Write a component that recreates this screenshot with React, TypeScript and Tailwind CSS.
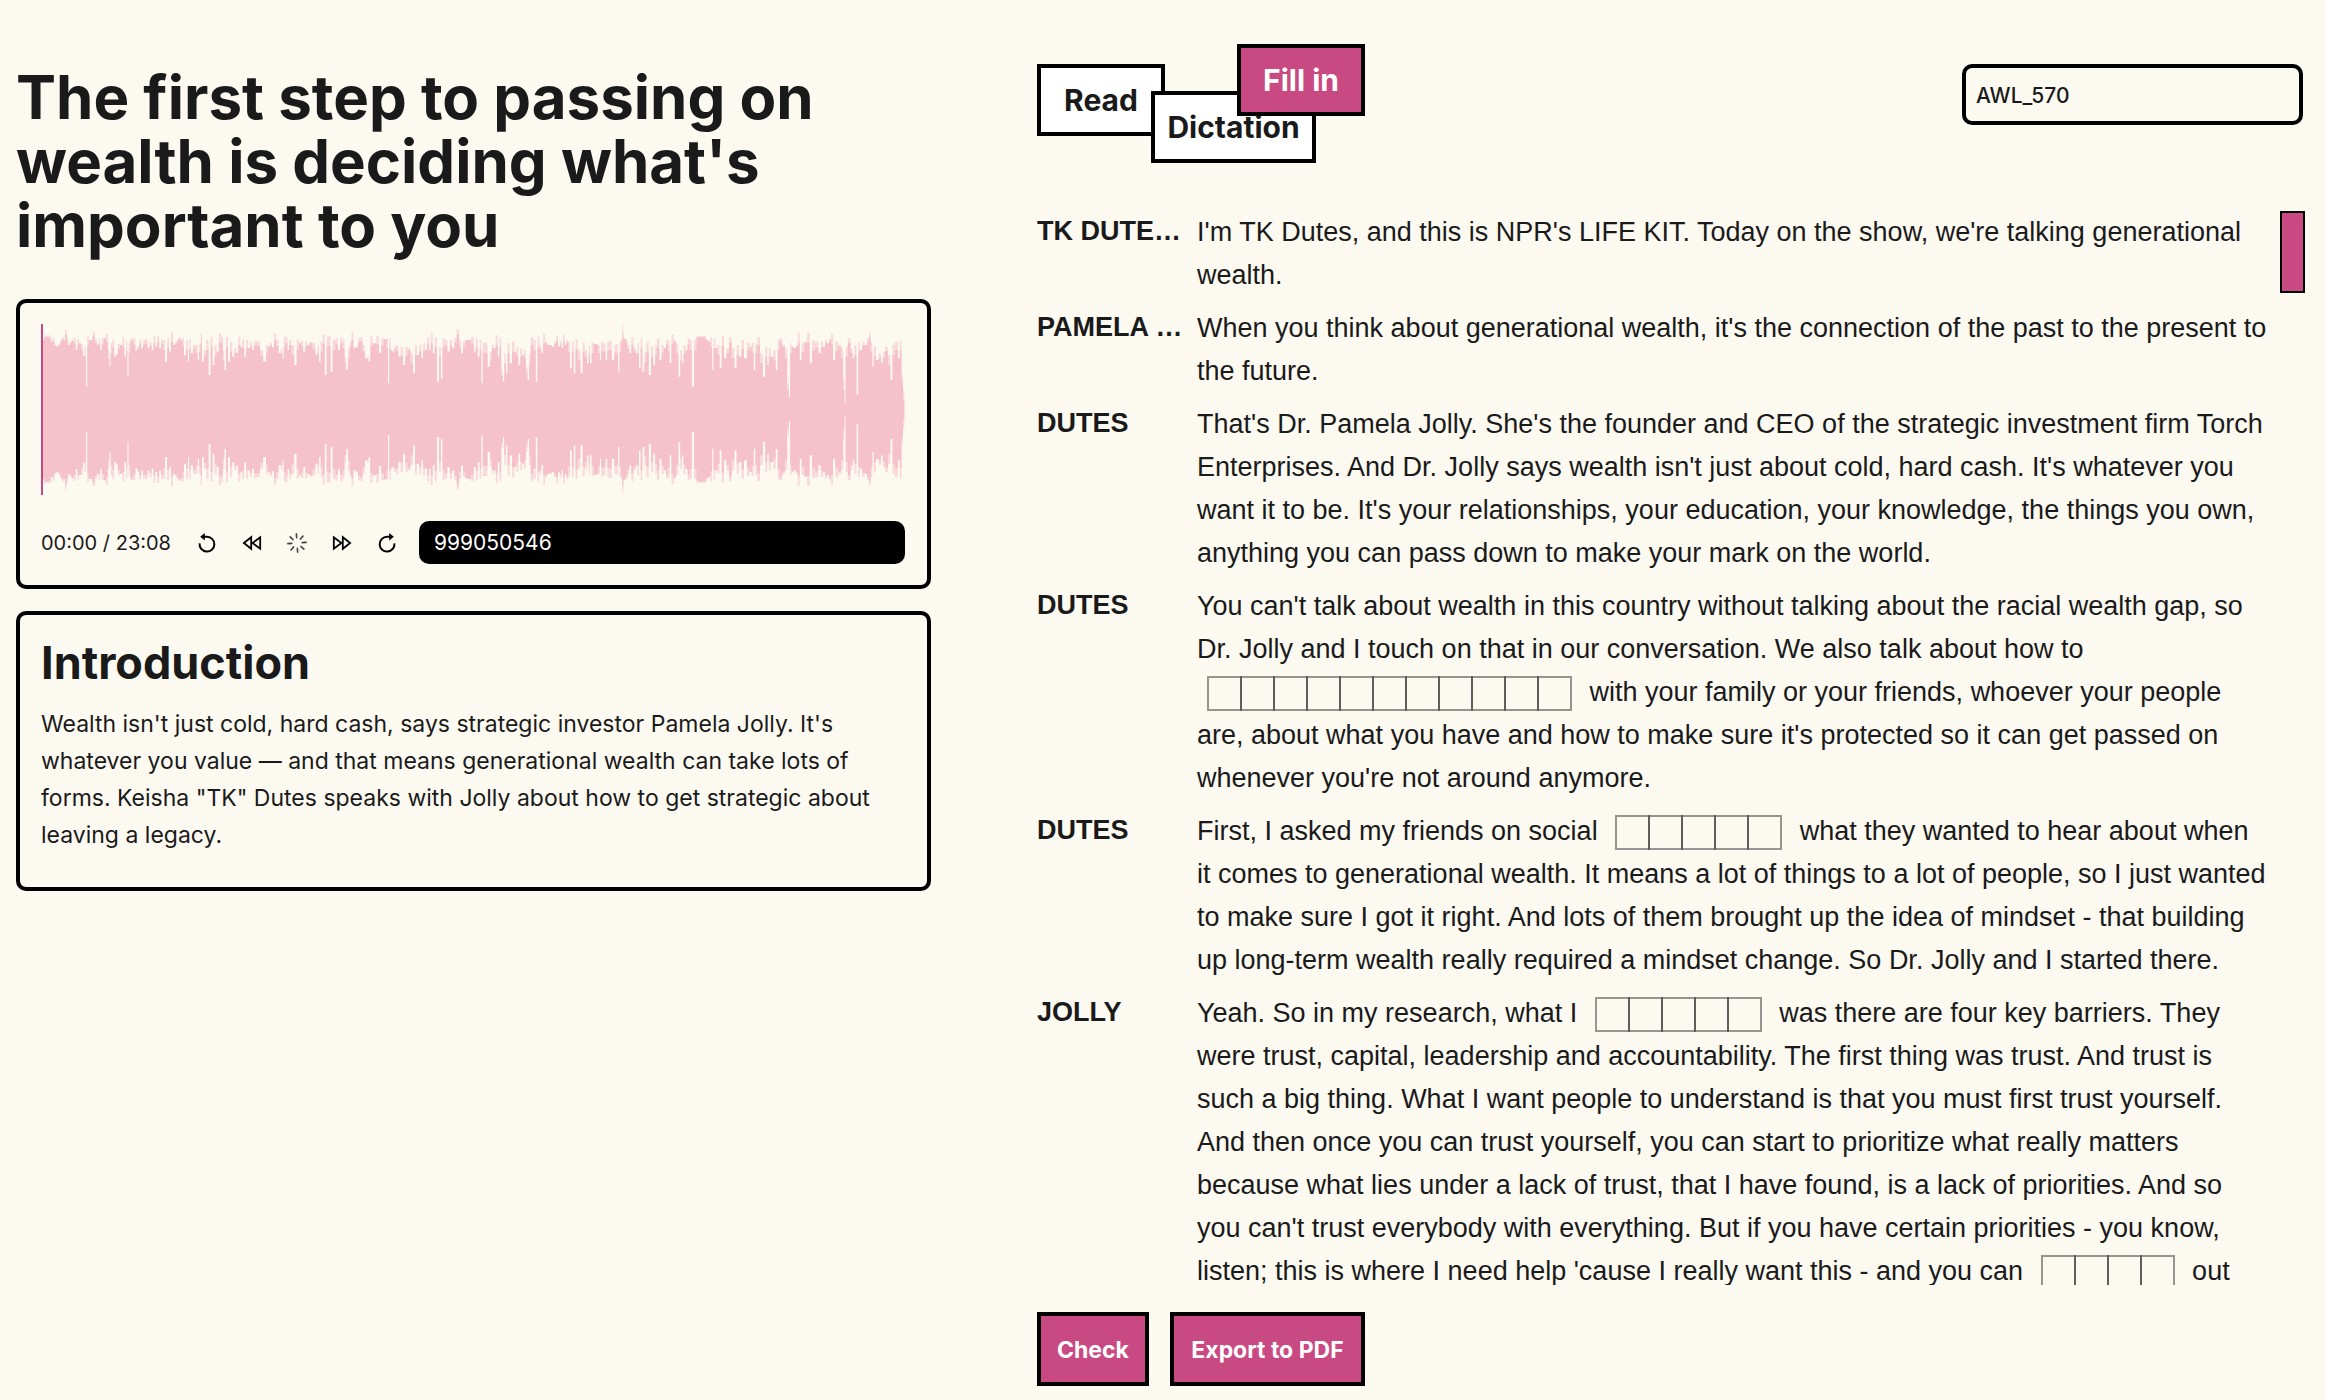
import React from "react";

/* Waveform peaks as x,y pairs on a 2592 x 513 grid (three units per pixel). */
const PEAKS_A = [
  22,60,28,45,34,50,42,46,48,65,52,53,58,75,65,80,70,72,76,60,80,50,84,60,90,28,94,50,98,75,104,65,110,60,116,53,122,90,126,57,
  132,70,138,72,143,108,148,80,152,200,156,48,160,60,166,60,173,37,180,60,186,75,190,55,195,90,200,55,207,55,213,42,218,90,222,140,226,70,232,60,
  237,110,243,100,248,72,256,75,262,52,268,110,272,62,276,170,280,70,286,56,295,55,301,92,307,80,313,57,318,85,325,60,332,58,337,85,344,65,350,90,
  355,48,361,80,366,48,373,85,378,58,384,60,390,125,397,55,402,95,408,37,414,75,419,68,425,60,430,52,437,60,441,52,447,105,454,60,458,125,461,57,
  467,100,475,75,483,75,487,120,492,72,496,40,500,125,507,90,514,60,521,165,527,50,532,135,539,75,545,95,552,40,558,50,563,90,567,150,573,50,579,125,
  585,65,592,110,598,85,604,100,610,50,616,80,621,58,628,110,633,60,640,85,645,65,652,90,657,62,668,65,676,90,687,125,693,75,699,80,704,68,711,82,
  717,42,724,58,731,100,738,85,741,115,746,50,752,50,757,90,762,60,770,75,779,135,785,60,792,70,798,62,805,95,811,62,817,75,825,65,834,70,842,105,
  847,75,851,125,857,65,863,42,869,165,875,50,880,48,887,155,893,60,903,55,908,90,916,52,923,60,928,110,933,150,939,85,944,65,949,37,955,85,963,80,
  969,55,976,52,983,75,990,115,995,110,1000,125,1006,47,1013,70,1018,70,1024,48,1033,98,1039,55,1048,58,1054,55,1058,190,1062,55,1066,90,1072,95,
  1078,80,1084,75,1090,110,1097,80,1105,135,1111,80,1119,85,1128,100,1134,160,1140,75,1146,105,1153,75,1159,115,1164,68,1170,90,1177,52,1181,90,
  1187,40,1193,100,1199,52,1206,185,1212,80,1217,178,1222,55,1230,60,1238,95,1245,60,1252,85,1258,55,1266,28,1272,60,1278,100,1284,65,1292,60,1300,60,
];
const PEAKS_B = [
  8,52,15,95,20,55,26,110,32,60,36,190,41,68,48,68,57,140,63,95,68,75,74,85,80,46,86,110,91,52,96,150,101,185,105,100,110,160,115,70,122,130,130,65,
  136,95,142,80,148,135,154,85,160,105,165,90,170,140,175,180,180,100,184,52,194,60,200,185,205,50,211,75,217,100,222,42,228,65,235,75,243,75,249,80,
  256,65,261,48,267,80,272,62,277,85,281,45,287,75,291,60,297,65,303,145,308,65,314,160,319,58,327,90,335,160,341,68,348,90,354,130,358,75,362,130,
  368,68,375,72,382,72,388,78,391,120,396,65,403,70,410,120,414,65,421,62,429,120,437,75,442,72,446,155,451,65,456,60,458,15,462,55,469,58,475,75,
  481,100,487,52,494,85,500,100,504,70,510,145,514,55,520,155,526,100,532,65,540,165,546,80,553,135,558,75,564,55,572,120,578,75,585,85,591,60,596,62,
  601,130,608,43,614,60,622,70,628,170,634,90,638,130,643,75,650,90,656,55,662,60,669,200,675,60,684,47,693,50,703,47,712,58,718,65,724,52,729,150,
  733,55,739,85,745,75,752,145,758,48,766,115,773,85,781,52,789,85,797,145,803,75,811,110,818,60,826,115,836,68,842,80,848,68,854,150,858,70,866,52,
  874,100,883,170,889,80,894,135,899,85,906,110,914,90,920,150,926,58,933,55,940,75,949,85,954,190,959,232,962,70,968,80,975,85,981,75,986,38,992,120,
  998,70,1008,65,1015,38,1023,130,1029,62,1041,65,1049,100,1056,65,1062,80,1068,60,1074,70,1081,55,1086,42,1092,120,1100,65,1109,75,1117,85,1122,180,
  1125,250,1129,80,1138,55,1145,85,1150,115,1156,75,1163,225,1167,65,1173,90,1180,65,1188,75,1195,55,1199,40,1205,65,1209,140,1214,80,1222,120,1230,100,
  1236,130,1241,95,1250,80,1257,105,1265,180,1270,75,1280,65,1287,115,1292,62,1297,165,1301,210,1305,268,
];

type Point = [number, number];

const MID = 256;

function toPoints(flat: number[], dx: number): Point[] {
  const out: Point[] = [];
  for (let i = 0; i < flat.length; i += 2) out.push([flat[i] + dx, flat[i + 1] - 12]);
  return out;
}

const OUTER = [...toPoints(PEAKS_A, -15), ...toPoints(PEAKS_B, 1287)];
const INNER: Point[] = OUTER.map(([x, y], i) => {
  const low = Math.max(OUTER[i - 1]?.[1] ?? y, OUTER[i + 1]?.[1] ?? y);
  return [x, low > y ? y + Math.min(30, (low - y) / 2) : y];
});

/* One flat-topped column per peak, each reaching halfway to its neighbours. */
function columns(points: Point[]) {
  return points
    .map(([x, y], i) => {
      const from = i === 0 ? x - 3 : (points[i - 1][0] + x) / 2;
      const to = i === points.length - 1 ? x : (x + points[i + 1][0]) / 2;
      return `M${from} ${y}H${to}V${2 * MID - y}H${from}Z`;
    })
    .join("");
}

function Waveform() {
  return (
    <svg viewBox="0 0 2592 513" preserveAspectRatio="none" className="block h-[171px] w-full" role="img" aria-label="Waveform">
      <path d={columns(OUTER)} fill="#f9dadc" />
      <path d={columns(INNER)} fill="#f5c1ca" />
      <rect x="0" y="0" width="6" height="513" fill="#c94982" />
    </svg>
  );
}

function IconButton({ label, children }: { label: string; children: React.ReactNode }) {
  return (
    <button type="button" aria-label={label} className="flex size-6 items-center justify-center text-black">
      <svg viewBox="0 0 24 24" className="size-6" fill="none" stroke="currentColor" strokeWidth="1.8">
        {children}
      </svg>
    </button>
  );
}

function Replay() {
  return (
    <>
      <path d="M4.6 12.4a7.4 7.4 0 1 0 7.4-6.6h-3" strokeWidth="2" />
      <path d="M5.2 5.8 9.8 2v7.6z" fill="currentColor" stroke="none" />
    </>
  );
}

function Rewind() {
  return <path d="M11.2 6.2v11.6L3.9 12zM20.2 6.2v11.6L12.6 12z" />;
}

const SPOKES = [0, 45, 90, 135, 180, 225, 270, 315];

function Blank({ letters }: { letters: number }) {
  return (
    <span className="mx-[10px] inline-flex pl-[2px] align-middle">
      {Array.from({ length: letters }, (_, i) => (
        <input
          key={i}
          maxLength={1}
          aria-label={`Letter ${i + 1} of ${letters}`}
          className="-ml-[2px] h-[35px] w-[35px] border-2 border-[#1a1a1a]/45 bg-transparent text-center"
        />
      ))}
    </span>
  );
}

const TRANSCRIPT: { who: string; parts: (string | number)[] }[] = [
  { who: "TK DUTE…", parts: ["I'm TK Dutes, and this is NPR's LIFE KIT. Today on the show, we're talking generational wealth."] },
  { who: "PAMELA …", parts: ["When you think about generational wealth, it's the connection of the past to the present to the future."] },
  {
    who: "DUTES",
    parts: [
      "That's Dr. Pamela Jolly. She's the founder and CEO of the strategic investment firm Torch Enterprises. And Dr. Jolly says wealth isn't just about cold, hard cash. It's whatever you want it to be. It's your relationships, your education, your knowledge, the things you own, anything you can pass down to make your mark on the world.",
    ],
  },
  {
    who: "DUTES",
    parts: [
      "You can't talk about wealth in this country without talking about the racial wealth gap, so Dr. Jolly and I touch on that in our conversation. We also talk about how to ",
      11,
      " with your family or your friends, whoever your people are, about what you have and how to make sure it's protected so it can get passed on whenever you're not around anymore.",
    ],
  },
  {
    who: "DUTES",
    parts: [
      "First, I asked my friends on social ",
      5,
      " what they wanted to hear about when it comes to generational wealth. It means a lot of things to a lot of people, so I just wanted to make sure I got it right. And lots of them brought up the idea of mindset - that building up long-term wealth really required a mindset change. So Dr. Jolly and I started there.",
    ],
  },
  {
    who: "JOLLY",
    parts: [
      "Yeah. So in my research, what I ",
      5,
      " was there are four key barriers. They were trust, capital, leadership and accountability. The first thing was trust. And trust is such a big thing. What I want people to understand is that you must first trust yourself. And then once you can trust yourself, you can start to prioritize what really matters because what lies under a lack of trust, that I have found, is a lack of priorities. And so you can't trust everybody with everything. But if you have certain priorities - you know, listen; this is where I need help 'cause I really want this - and you can ",
      4,
      " out",
    ],
  },
];

export default function App() {
  return (
    <div className="grid h-screen grid-cols-[915fr_1268fr] gap-[106px] overflow-hidden bg-[#fcf9f1] pr-[21px] pl-4 font-['Inter',sans-serif] text-[#1a1a1a]">
      <section className="pt-[65px]">
        <h1 className="text-[60px] leading-[64px] font-bold">The first step to passing on wealth is deciding what's important to you</h1>

        <div className="mt-[42px] rounded-[10px] border-4 border-black py-[21px] pr-[22px] pl-[21px]">
          <Waveform />
          <div className="mt-[26px] flex items-center">
            <span className="w-[154px] shrink-0 text-[20px]">00:00 / 23:08</span>
            <div className="flex shrink-0 gap-[21px]">
              <IconButton label="Back 10 seconds">
                <Replay />
              </IconButton>
              <IconButton label="Rewind">
                <Rewind />
              </IconButton>
              <IconButton label="Loading">
                {SPOKES.map((a) => (
                  <path key={a} d="M12 6.8V2.8" transform={`rotate(${a - 4} 12 12)`} strokeWidth="1.6" stroke="#444444" strokeLinecap="round" />
                ))}
              </IconButton>
              <IconButton label="Fast forward">
                <g transform="matrix(-1 0 0 1 24 0)">
                  <Rewind />
                </g>
              </IconButton>
              <IconButton label="Forward 10 seconds">
                <g transform="matrix(-1 0 0 1 24 0)">
                  <Replay />
                </g>
              </IconButton>
            </div>
            <input
              aria-label="Episode"
              defaultValue="999050546"
              className="ml-5 h-[43px] min-w-0 flex-1 rounded-[10px] bg-black px-[15px] text-[21px] text-white"
            />
          </div>
        </div>

        <article className="mt-[22px] rounded-[10px] border-4 border-black px-[21px] pt-[21px] pb-[33px]">
          <h2 className="text-[45px] leading-[54px] font-bold">Introduction</h2>
          <p className="mt-4 text-[23px] leading-[37px]">
            Wealth isn't just cold, hard cash, says strategic investor Pamela Jolly. It's whatever you value — and that means generational wealth can
            take lots of forms. Keisha "TK" Dutes speaks with Jolly about how to get strategic about leaving a legacy.
          </p>
        </article>
      </section>

      <section className="flex min-h-0 flex-col pt-11 pb-[14px]">
        <header className="flex items-start justify-between pr-[2px] pb-12">
          <nav className="flex h-[119px] items-start text-[30px] font-bold" aria-label="Modes">
            <button type="button" className="mt-5 h-[72px] w-32 border-4 border-black bg-white">
              Read
            </button>
            <button type="button" className="mt-[47px] -ml-[14px] h-[72px] w-[165px] border-4 border-black bg-white">
              Dictation
            </button>
            <button type="button" className="z-10 -ml-[79px] h-[72px] w-32 border-4 border-black bg-[#c94982] text-white">
              Fill in
            </button>
          </nav>
          <input
            aria-label="Word list"
            defaultValue="AWL_570"
            className="mt-5 h-[61px] w-[341px] rounded-[10px] border-4 border-black bg-transparent px-[10px] pt-[2px] text-[21px] font-medium"
          />
        </header>

        <div className="flex min-h-0 flex-1 font-['Liberation_Sans',sans-serif] text-[27px]">
          <div className="flex min-w-0 flex-1 flex-col gap-[10px] overflow-hidden pr-3">
            {TRANSCRIPT.map((row, i) => (
              <div key={i} className="grid shrink-0 grid-cols-[144px_1fr] gap-4">
                <h3 className="leading-[41px] font-bold whitespace-nowrap">{row.who}</h3>
                <p className="leading-[43px]">{row.parts.map((p, j) => (typeof p === "number" ? <Blank key={j} letters={p} /> : p))}</p>
              </div>
            ))}
          </div>
          <div className="h-[82px] w-[25px] shrink-0 border-2 border-black bg-[#c94982]" />
        </div>

        <footer className="mt-[27px] flex gap-[21px] text-[23px] font-bold text-white">
          <button type="button" className="h-[74px] w-28 border-4 border-black bg-[#c94982] pt-[2px]">
            Check
          </button>
          <button type="button" className="h-[74px] w-[195px] border-4 border-black bg-[#c94982] pt-[2px]">
            Export to PDF
          </button>
        </footer>
      </section>
    </div>
  );
}
